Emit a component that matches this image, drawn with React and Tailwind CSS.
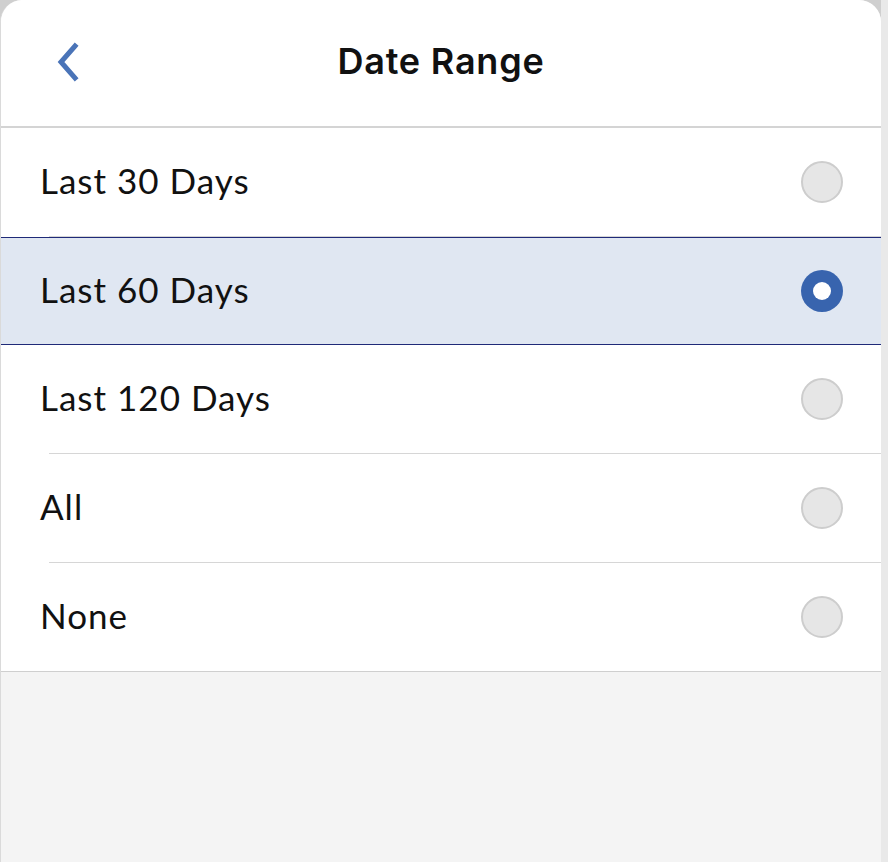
const options = [
  { label: 'Last 30 Days', selected: false, sep: true },
  { label: 'Last 60 Days', selected: true, sep: false },
  { label: 'Last 120 Days', selected: false, sep: true },
  { label: 'All', selected: false, sep: true },
  { label: 'None', selected: false, sep: false },
]

function Radio({ on }) {
  if (on) {
    return (
      <div className="w-[42px] h-[42px] rounded-full bg-[#3864ae] flex items-center justify-center">
        <div className="w-[18px] h-[18px] rounded-full bg-white"></div>
      </div>
    )
  }
  return <div className="w-[42px] h-[42px] rounded-full bg-[#e6e6e6] border-2 border-[#cdcdcd]"></div>
}

function Row({ label, selected, sep }) {
  return (
    <div className={selected ? 'bg-[#e0e7f2] border-y border-[#1f2a78]' : ''}>
      <div className={(selected ? 'h-[106px]' : 'h-[108px]') + ' flex items-center justify-between pl-[39px] pr-[38px]'}>
        <span className="text-[35px] text-[#111] tracking-[1px] -mt-1">{label}</span>
        <Radio on={selected} />
      </div>
      {sep && <div className="ml-12 h-px bg-[#d6d6d6]"></div>}
    </div>
  )
}

export default function App() {
  return (
    <div className="w-[888px] h-[862px] bg-[#cfcfcf] flex" style={{ fontFamily: 'Lato, "Noto Sans", sans-serif' }}>
      <div className="w-[881px] h-full flex flex-col bg-[#f4f4f4] rounded-t-[22px] overflow-hidden border-l border-[#dadada]">
        <div className="h-[128px] bg-white relative flex items-center justify-center border-b-2 border-[#d4d4d4] shrink-0">
          <button className="absolute left-[50px] top-[38px] p-1">
            <svg width="26" height="42" viewBox="0 0 26 42" fill="none">
              <path d="M20 4 L6 20 L20 36" stroke="#4a74b8" strokeWidth="5" strokeLinecap="square" />
            </svg>
          </button>
          <h1 className="text-[36px] font-semibold text-[#111] -mt-1 tracking-[0.8px]" style={{ fontFamily: 'Inter, sans-serif' }}>Date Range</h1>
        </div>
        <div className="bg-white border-b border-[#cfcfcf]">
          {options.map((o) => (
            <Row key={o.label} {...o} />
          ))}
        </div>
        <div className="flex-1"></div>
      </div>
      <div className="w-[7px] h-full bg-[#e9e9e9]"></div>
    </div>
  )
}
